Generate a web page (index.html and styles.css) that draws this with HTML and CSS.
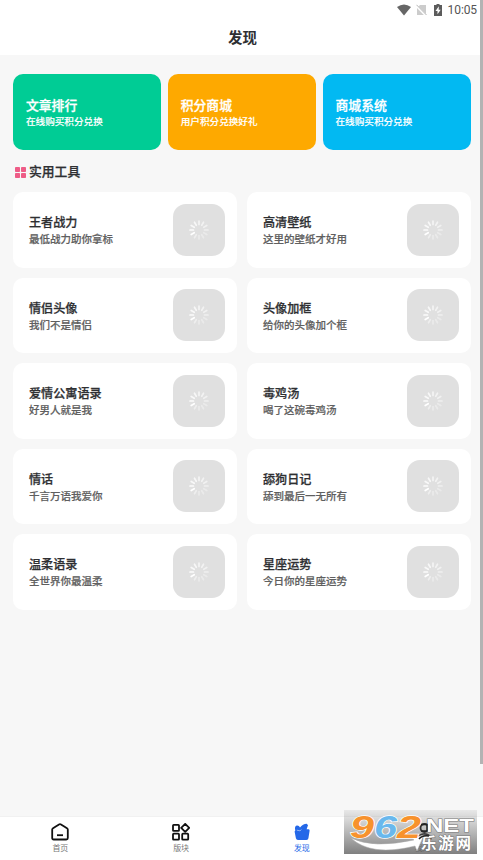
FILE: index.html
```html
<!DOCTYPE html>
<html lang="zh-CN">
<head>
<meta charset="utf-8">
<title>发现</title>
<link rel="stylesheet" href="styles.css">
</head>
<body>
<svg class="defs" aria-hidden="true">
  <symbol id="spinner" viewBox="-10 -10 20 20">
    <g stroke="#fff" stroke-width="1.7" stroke-linecap="round">
      <path d="M0-5.5V-9" opacity=".65"/>
      <path d="M0-5.5V-9" transform="rotate(30)" opacity=".6"/>
      <path d="M0-5.5V-9" transform="rotate(60)" opacity=".55"/>
      <path d="M0-5.5V-9" transform="rotate(90)" opacity=".5"/>
      <path d="M0-5.5V-9" transform="rotate(120)" opacity=".35"/>
      <path d="M0-5.5V-9" transform="rotate(150)" opacity=".35"/>
      <path d="M0-5.5V-9" transform="rotate(180)" opacity=".35"/>
      <path d="M0-5.5V-9" transform="rotate(210)" opacity=".45"/>
      <path d="M0-5.5V-9" transform="rotate(240)"/>
      <path d="M0-5.5V-9" transform="rotate(270)" opacity=".9"/>
      <path d="M0-5.5V-9" transform="rotate(300)" opacity=".8"/>
      <path d="M0-5.5V-9" transform="rotate(330)" opacity=".75"/>
    </g>
  </symbol>
</svg>
<div class="app">
  <header class="header">
    <div class="status">
      <svg class="wifi" width="14" height="12" viewBox="0 0 14 12"><path d="M0 3Q7-2 14 3L7 11.5Z" fill="#666"/></svg>
      <svg class="sim" width="11" height="12" viewBox="0 0 11 12"><path d="M4 1h6v10H1V4Z" fill="#ccc"/><path d="M0 1.3 10 11.5" stroke="#fff" stroke-width="2.4"/><path d="M.5.8 10.5 11" stroke="#b5b5b5"/></svg>
      <svg class="battery" width="8" height="12" viewBox="0 0 8 12"><path d="M2.5 0h3v1H8v11H0V1h2.5Z" fill="#5c5c5c"/><path d="M4.8 2.3 1.5 7h2v3.3L6.7 5.7h-2Z" fill="#fff"/></svg>
      <span>10:05</span>
    </div>
    <h1 class="title">发现</h1>
  </header>
  <main class="content">
    <section class="banners">
      <a class="banner green"><b>文章排行</b><span>在线购买积分兑换</span></a>
      <a class="banner orange"><b>积分商城</b><span>用户积分兑换好礼</span></a>
      <a class="banner blue"><b>商城系统</b><span>在线购买积分兑换</span></a>
    </section>
    <h2 class="section-title">
      <svg width="11" height="11" viewBox="0 0 11 11" fill="#ee5c87"><rect width="5" height="5" rx=".8"/><rect x="6" width="5" height="5" rx=".8"/><rect y="6" width="5" height="5" rx=".8"/><rect x="6" y="6" width="5" height="5" rx=".8"/></svg>
      <span>实用工具</span>
    </h2>
    <section class="tools">
      <a class="tool"><div><b>王者战力</b><span>最低战力助你拿标</span></div><i class="thumb"><svg><use href="#spinner"/></svg></i></a>
      <a class="tool"><div><b>高清壁纸</b><span>这里的壁纸才好用</span></div><i class="thumb"><svg><use href="#spinner"/></svg></i></a>
      <a class="tool"><div><b>情侣头像</b><span>我们不是情侣</span></div><i class="thumb"><svg><use href="#spinner"/></svg></i></a>
      <a class="tool"><div><b>头像加框</b><span>给你的头像加个框</span></div><i class="thumb"><svg><use href="#spinner"/></svg></i></a>
      <a class="tool"><div><b>爱情公寓语录</b><span>好男人就是我</span></div><i class="thumb"><svg><use href="#spinner"/></svg></i></a>
      <a class="tool"><div><b>毒鸡汤</b><span>喝了这碗毒鸡汤</span></div><i class="thumb"><svg><use href="#spinner"/></svg></i></a>
      <a class="tool"><div><b>情话</b><span>千言万语我爱你</span></div><i class="thumb"><svg><use href="#spinner"/></svg></i></a>
      <a class="tool"><div><b>舔狗日记</b><span>舔到最后一无所有</span></div><i class="thumb"><svg><use href="#spinner"/></svg></i></a>
      <a class="tool"><div><b>温柔语录</b><span>全世界你最温柔</span></div><i class="thumb"><svg><use href="#spinner"/></svg></i></a>
      <a class="tool"><div><b>星座运势</b><span>今日你的星座运势</span></div><i class="thumb"><svg><use href="#spinner"/></svg></i></a>
    </section>
  </main>
  <nav class="tabs">
    <a class="tab">
      <svg viewBox="0 0 18 18" fill="none" stroke="#111" stroke-width="1.8" stroke-linejoin="round"><path d="M1.2 6.6Q1.2 5.8 2 5.3L8 1.4Q9 .8 10 1.4L16 5.3Q16.8 5.8 16.8 6.6V15Q16.8 16.5 15.3 16.5H2.7Q1.2 16.5 1.2 15Z"/><path d="M6 12.2h6"/></svg>
      <span>首页</span>
    </a>
    <a class="tab">
      <svg viewBox="0 0 18 18" fill="none" stroke="#111" stroke-width="1.8" stroke-linejoin="round"><rect x="1" y="1.9" width="6" height="6" rx=".7"/><path d="M13.2.9 17.2 4.9 13.2 8.9 9.2 4.9Z"/><rect x="1" y="10.7" width="6" height="6" rx=".7"/><rect x="10.2" y="10.7" width="6" height="6" rx=".7"/></svg>
      <span>版块</span>
    </a>
    <a class="tab active">
      <svg viewBox="0 0 18 18" fill="#2468e8"><path d="M2.3 7.4C1.6 5 2 3 3.8 2.6 5.3 2.4 6.4 3.4 7 4.6 8.7 2.2 11.1.7 13.8.7L15 2.3 13.6 6.2H15.6Q16.8 6.2 16.6 7.8L15.4 15.2Q15.2 17 13.4 17H5Q3.3 17 2.9 15.2L1.6 8.4Z"/><path d="M3.8 7.2 7 7.8 8.4 6.6" fill="none" stroke="#fff" stroke-width=".5"/></svg>
      <span>发现</span>
    </a>
    <a class="tab">
      <svg viewBox="0 0 18 18" fill="none" stroke="#111" stroke-width="1.8"><circle cx="10.5" cy="5" r="4"/><path d="M2.5 16.5Q5.5 10.8 10.5 10.8T17 16.5"/></svg>
      <span>我的</span>
    </a>
  </nav>
</div>
<div class="scrollbar"></div>
<div class="watermark">
  <svg width="133" height="44" viewBox="0 0 133 44">
    <path d="M7 28Q29 39 70 30L68 28 80 25 73 41 71 36Q27 47 7 28Z" fill="#fff" stroke="#aaa" stroke-width=".5"/>
    <g class="wm-number" stroke="#fff" stroke-width="1.4" paint-order="stroke">
      <text x="6" y="28" textLength="24" lengthAdjust="spacingAndGlyphs" fill="#f7922d">9</text>
      <text x="30" y="28" textLength="23" lengthAdjust="spacingAndGlyphs" fill="#69b8ed">6</text>
      <text x="53" y="28" textLength="24" lengthAdjust="spacingAndGlyphs" fill="#f7922d">2</text>
    </g>
    <g fill="#fff" stroke="#777" stroke-width="1" paint-order="stroke">
      <text class="wm-net" x="82" y="22" textLength="48" lengthAdjust="spacingAndGlyphs">NET</text>
      <text class="wm-name" x="77" y="39" textLength="50">乐游网</text>
    </g>
    <g fill="none" stroke="#222" stroke-width="1.5"><path d="M77 14.5H83V21H77M75 29Q78 25 85 26"/></g>
  </svg>
</div>
</body>
</html>
```
FILE: styles.css
```css
* { box-sizing: border-box; }
body {
  margin: 0;
  background: #f7f7f7;
  color: #2e2f32;
  font-family: Roboto, "Noto Sans CJK SC", sans-serif;
}
.defs { position: absolute; width: 0; height: 0; }
.app { display: flex; flex-direction: column; height: 860px; }
.header { height: 55px; background: #fff; }
.status {
  display: flex;
  align-items: center;
  height: 19px;
  padding-right: 6px;
  justify-content: flex-end;
  font-size: 12px;
  letter-spacing: -.1px;
  color: #555;
}
.status svg { flex: none; }
.wifi { margin-right: 5px; }
.sim { margin-right: 7px; }
.battery { margin-right: 6px; }
.title {
  margin: 0;
  padding-left: 2px;
  text-align: center;
  font-size: 14.4px;
  line-height: 39px;
  font-weight: 700;
}
.content { flex: 1; padding: 19px 12px 0 13px; }
.banners { display: grid; grid-template-columns: repeat(3, 1fr); gap: 6.3px; }
.banner {
  display: flex;
  flex-direction: column;
  height: 76px;
  padding: 23px 13px 0;
  border-radius: 10px;
  color: #fff;
}
.banner b { font-size: 12.8px; line-height: 17px; font-weight: 500; -webkit-text-stroke: .3px; }
.banner span { font-size: 9.6px; line-height: 16px; font-weight: 500; -webkit-text-stroke: .15px; }
.green { background: #00cc95; }
.orange { background: #fea900; }
.blue { background: #02b9f2; }
.section-title {
  display: flex;
  align-items: center;
  gap: 3px;
  height: 42px;
  margin: 0;
  padding: 2px 0 0 2px;
  font-size: 12.8px;
  font-weight: 500;
  -webkit-text-stroke: .25px;
}
.section-title svg { flex: none; }
.section-title span { line-height: 18px; }
.tools { display: grid; grid-template-columns: 1fr 1fr; gap: 10px; }
.tool {
  display: flex;
  align-items: center;
  justify-content: space-between;
  height: 75.5px;
  padding: 0 12.5px 0 16px;
  background: #fff;
  border-radius: 10px;
}
.tool div { padding-top: 4px; }
.tool b { display: block; font-size: 12.1px; line-height: 17px; font-weight: 500; -webkit-text-stroke: .25px; }
.tool div span { display: block; font-size: 10.5px; line-height: 16px; font-weight: 500; color: #5f5f5f; -webkit-text-stroke: .2px; }
.thumb {
  display: flex;
  align-items: center;
  justify-content: center;
  width: 51.5px;
  height: 52px;
  border-radius: 13px;
  background: #e0e0e0;
}
.thumb svg { width: 20px; height: 20px; }
.tabs { display: flex; height: 44px; background: #fff; border-top: 1px solid #f1f1f1; }
.tab {
  display: flex;
  flex: 1;
  flex-direction: column;
  align-items: center;
  padding-top: 6px;
  font-size: 8px;
  line-height: 13px;
  color: #777;
}
.tab svg { width: 18px; height: 18px; margin-bottom: 1px; }
.active { color: #2468e8; }
.scrollbar {
  position: absolute;
  top: 0;
  right: 0;
  width: 3px;
  height: 764px;
  background: #b3b3b3;
}
.watermark {
  position: absolute;
  left: 344px;
  top: 810px;
  width: 133px;
  height: 44px;
  background: linear-gradient(rgba(100,100,100,.1), rgba(100,100,100,.82));
}
.watermark svg { display: block; overflow: visible; }
.wm-number { font: italic 700 32px "Liberation Sans", sans-serif; }
.wm-net { font: 700 18px "Liberation Sans", sans-serif; }
.wm-name { font: 700 15.5px "Noto Sans CJK SC", sans-serif; }
```
